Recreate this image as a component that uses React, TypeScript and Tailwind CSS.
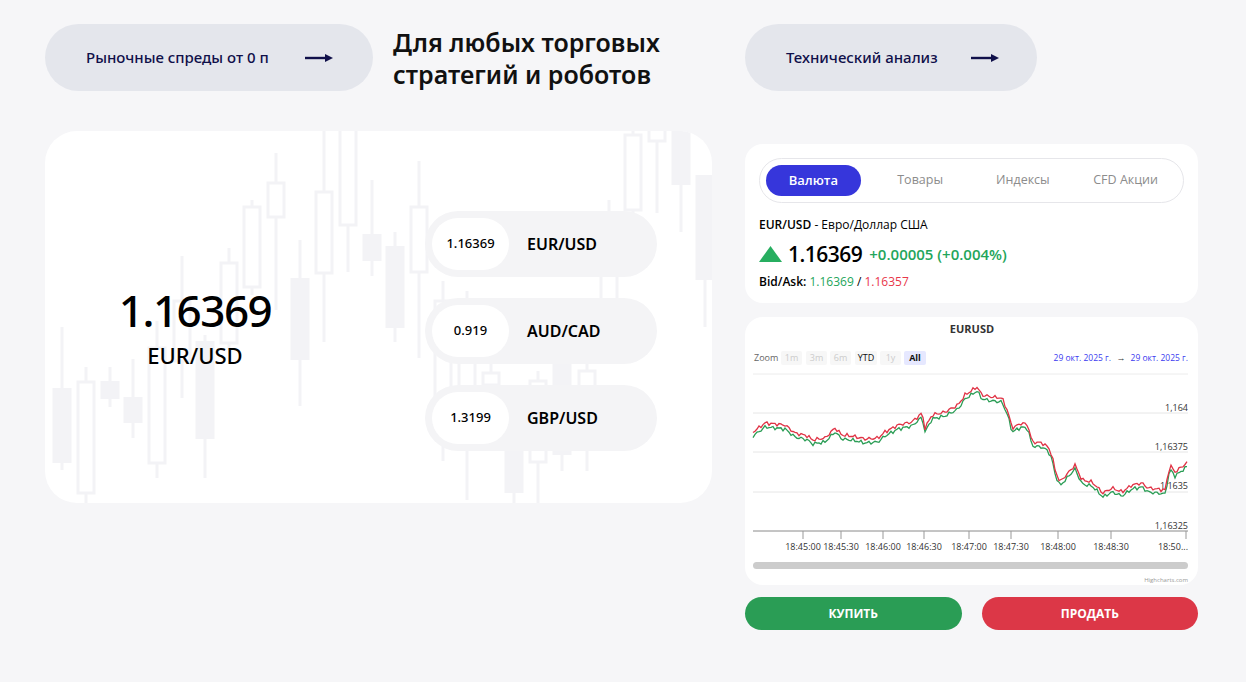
import React from "react";

type Candle = { c: number; bt: number; bb: number; wt: number; wb: number; filled: boolean };

// background candles, card-relative coordinates
const candles: Candle[] = [
  { c: 17, bt: 257, bb: 332, wt: 196, wb: 339, filled: true },
  { c: 41, bt: 251, bb: 362, wt: 236, wb: 372, filled: false },
  { c: 65, bt: 250, bb: 268, wt: 236, wb: 276, filled: true },
  { c: 88, bt: 266, bb: 292, wt: 228, wb: 307, filled: true },
  { c: 112, bt: 217, bb: 332, wt: 190, wb: 347, filled: false },
  { c: 137, bt: 170, bb: 230, wt: 125, wb: 267, filled: false },
  { c: 160, bt: 210, bb: 308, wt: 204, wb: 347, filled: true },
  { c: 184, bt: 132, bb: 212, wt: 117, wb: 219, filled: false },
  { c: 207, bt: 76, bb: 156, wt: 69, wb: 164, filled: false },
  { c: 231, bt: 52, bb: 86, wt: 22, wb: 179, filled: false },
  { c: 255, bt: 147, bb: 229, wt: 109, wb: 275, filled: true },
  { c: 279, bt: 61, bb: 142, wt: -5, wb: 211, filled: false },
  { c: 303, bt: -5, bb: 94, wt: -5, wb: 141, filled: false },
  { c: 327, bt: 103, bb: 130, wt: 49, wb: 145, filled: true },
  { c: 350, bt: 115, bb: 197, wt: 101, wb: 211, filled: true },
  { c: 374, bt: 76, bb: 141, wt: 30, wb: 227, filled: false },
  { c: 398, bt: 170, bb: 270, wt: 150, wb: 330, filled: false },
  { c: 422, bt: 170, bb: 310, wt: 160, wb: 369, filled: false },
  { c: 446, bt: 242, bb: 254, wt: 229, wb: 290, filled: false },
  { c: 469, bt: 289, bb: 362, wt: 269, wb: 372, filled: true },
  { c: 493, bt: 250, bb: 331, wt: 240, wb: 372, filled: false },
  { c: 517, bt: 229, bb: 324, wt: 220, wb: 340, filled: true },
  { c: 542, bt: 240, bb: 300, wt: 230, wb: 340, filled: false },
  { c: 564, bt: 109, bb: 169, wt: 69, wb: 189, filled: false },
  { c: 588, bt: 4, bb: 79, wt: -1, wb: 86, filled: false },
  { c: 612, bt: -30, bb: 10, wt: -30, wb: 82, filled: false },
  { c: 636, bt: -5, bb: 54, wt: -5, wb: 101, filled: true },
  { c: 660, bt: 44, bb: 149, wt: 44, wb: 196, filled: true },
];

const CandleBackground = () => (
  <svg className="absolute inset-0" width="667" height="372" viewBox="0 0 667 372">
    {candles.map((k, i) => (
      <g key={i}>
        <line x1={k.c} x2={k.c} y1={k.wt} y2={k.wb} stroke="#f3f3f6" strokeWidth="3" />
        {k.filled ? (
          <rect x={k.c - 9.5} y={k.bt} width="19" height={k.bb - k.bt} fill="#f3f3f6" />
        ) : (
          <rect x={k.c - 8} y={k.bt} width="16" height={k.bb - k.bt} fill="#ffffff" stroke="#f3f3f6" strokeWidth="3" />
        )}
      </g>
    ))}
  </svg>
);

const Arrow = () => (
  <svg width="28" height="10" viewBox="0 0 28 10">
    <line x1="0" y1="5" x2="22" y2="5" stroke="#10104a" strokeWidth="2.4" />
    <path d="M20 1 L28 5 L20 9 Z" fill="#10104a" />
  </svg>
);

const TopPill = ({ label, width, gap }: { label: string; width: string; gap: string }) => (
  <div className={`flex h-[67px] ${width} shrink-0 items-center rounded-full bg-[#e4e6ec] pl-[41px]`}>
    <span className="text-[15px] font-medium text-[#10104a]">{label}</span>
    <span className={gap}>
      <Arrow />
    </span>
  </div>
);

const PairPill = ({ price, pair }: { price: string; pair: string }) => (
  <div className="flex h-[66px] w-[232px] items-center rounded-full bg-[#f4f4f6] p-[7px]">
    <div className="flex h-[52px] w-[77px] items-center justify-center rounded-full bg-white text-[13px] font-medium text-black">
      {price}
    </div>
    <span className="ml-[18px] text-[16px] font-semibold text-black">{pair}</span>
  </div>
);

// price series, absolute page coordinates turned into chart-relative
const keys: [number, number][] = [
  [753, 432], [765, 423], [785, 425], [795, 433], [808, 436], [812, 440], [825, 438], [835, 428],
  [842, 435], [852, 436], [865, 439], [878, 438], [885, 432], [898, 425], [912, 422], [922, 413],
  [925, 428], [932, 415], [945, 412], [958, 405], [965, 395], [977, 387], [982, 395], [992, 397],
  [1002, 398], [1008, 412], [1012, 428], [1022, 423], [1028, 425], [1032, 442], [1042, 443],
  [1048, 447], [1052, 455], [1055, 470], [1060, 482], [1075, 465], [1082, 480], [1092, 482],
  [1103, 493], [1112, 488], [1122, 492], [1132, 485], [1142, 483], [1148, 488], [1165, 490],
  [1170, 465], [1175, 472], [1188, 462],
];

function series(offset: number, seed: number) {
  const pts: string[] = [];
  let i = 0;
  for (let x = 753; x <= 1188; x += 2) {
    let j = 0;
    while (j < keys.length - 2 && keys[j + 1][0] < x) j++;
    const [x0, y0] = keys[j];
    const [x1, y1] = keys[j + 1];
    const t = x1 === x0 ? 0 : Math.min(1, Math.max(0, (x - x0) / (x1 - x0)));
    const y = y0 + (y1 - y0) * t;
    const n = 1.2 * Math.sin(i * 1.7 + seed) + 0.8 * Math.sin(i * 3.3 + seed * 2);
    pts.push(`${(x - 745).toFixed(1)},${(y - 317 + offset + n).toFixed(1)}`);
    i++;
  }
  return pts.join(" ");
}

const ticks = [
  { x: 58, l: "18:45:00" },
  { x: 96, l: "18:45:30" },
  { x: 138, l: "18:46:00" },
  { x: 179, l: "18:46:30" },
  { x: 224, l: "18:47:00" },
  { x: 266, l: "18:47:30" },
  { x: 313, l: "18:48:00" },
  { x: 366, l: "18:48:30" },
];

const zoomBtns = [
  { x: 36, w: 21, l: "1m", on: false },
  { x: 61, w: 21, l: "3m", on: false },
  { x: 85, w: 21, l: "6m", on: false },
  { x: 110, w: 22, l: "YTD", on: true },
  { x: 135, w: 21, l: "1y", on: false },
  { x: 159, w: 22, l: "All", on: true },
];

const Chart = () => (
  <svg width="453" height="268" viewBox="0 0 453 268" style={{ fontFamily: "'Open Sans', sans-serif" }}>
    <text x="227" y="16" textAnchor="middle" fontSize="11" fontWeight="700" fill="#333">EURUSD</text>
    <text x="9" y="44" fontSize="9" fill="#666">Zoom</text>
    {zoomBtns.map((b) => (
      <g key={b.l}>
        <rect x={b.x} y="34" width={b.w} height="14" rx="2" fill={b.l === "All" ? "#e6e8ff" : "#f7f7f7"} />
        <text
          x={b.x + b.w / 2}
          y="44"
          textAnchor="middle"
          fontSize="9"
          fontWeight={b.l === "All" ? 700 : 400}
          fill={b.on ? "#111" : "#cccccc"}
        >
          {b.l}
        </text>
      </g>
    ))}
    <text x="366" y="44" textAnchor="end" fontSize="8.5" fill="#3c3cf0">29 окт. 2025 г.</text>
    <text x="376" y="44" textAnchor="middle" fontSize="9" fill="#333">→</text>
    <text x="443" y="44" textAnchor="end" fontSize="8.5" fill="#3c3cf0">29 окт. 2025 г.</text>

    <line x1="8" x2="443" y1="57" y2="57" stroke="#ececec" />
    <line x1="8" x2="443" y1="96" y2="96" stroke="#e6e6e6" />
    <line x1="8" x2="443" y1="135" y2="135" stroke="#e6e6e6" />
    <line x1="8" x2="443" y1="175" y2="175" stroke="#e6e6e6" />
    <text x="443" y="94" textAnchor="end" fontSize="9" fill="#333">1,164</text>
    <text x="443" y="133" textAnchor="end" fontSize="9" fill="#333">1,16375</text>
    <text x="443" y="172" textAnchor="end" fontSize="9" fill="#333">1,1635</text>
    <text x="443" y="212" textAnchor="end" fontSize="9" fill="#333">1,16325</text>

    <polyline points={series(4, 1.3)} fill="none" stroke="#2a9d55" strokeWidth="1.3" />
    <polyline points={series(0, 0.2)} fill="none" stroke="#e03345" strokeWidth="1.3" />

    <line x1="8" x2="443" y1="214" y2="214" stroke="#8a8a8a" />
    {ticks.map((t) => (
      <g key={t.l}>
        <line x1={t.x} x2={t.x} y1="214" y2="222" stroke="#999" />
        <text x={t.x} y="233" textAnchor="middle" fontSize="9" fill="#333">{t.l}</text>
      </g>
    ))}
    <line x1="441" x2="441" y1="214" y2="222" stroke="#999" />
    <text x="443" y="233" textAnchor="end" fontSize="9" fill="#333">18:50...</text>

    <rect x="8" y="245" width="435" height="7" rx="3.5" fill="#cccccc" />
    <text x="443" y="265" textAnchor="end" fontSize="6" fill="#999">Highcharts.com</text>
  </svg>
);

const tabs = ["Валюта", "Товары", "Индексы", "CFD Акции"];

export default function App() {
  return (
    <div className="min-h-[682px] w-full bg-[#f6f6f8] px-[45px] pt-[24px] font-['Noto_Sans',sans-serif]">
      <div className="flex gap-[33px]">
        {/* left column */}
        <div className="flex w-[667px] flex-col">
          <div className="flex items-center">
            <TopPill label="Рыночные спреды от 0 п" width="w-[328px]" gap="ml-[36px]" />
            <h2 className="ml-[20px] text-[25px] font-semibold leading-[32px] text-[#111]">
              Для любых торговых
              <br />
              стратегий и роботов
            </h2>
          </div>

          <div className="relative mt-[40px] h-[372px] overflow-hidden rounded-[32px] bg-white">
            <CandleBackground />
            <div className="relative flex h-full items-center pt-[28px]">
              <div className="mb-[6px] flex w-[300px] flex-col items-center">
                <span className="text-[44px] font-medium leading-[44px] tracking-[-1.5px] text-black">1.16369</span>
                <span className="mt-[10px] text-[22px] font-medium leading-[26px] text-black">EUR/USD</span>
              </div>
              <div className="ml-[80px] flex flex-col gap-[21px]">
                <PairPill price="1.16369" pair="EUR/USD" />
                <PairPill price="0.919" pair="AUD/CAD" />
                <PairPill price="1.3199" pair="GBP/USD" />
              </div>
            </div>
          </div>
        </div>

        {/* right column */}
        <div className="flex w-[453px] flex-col font-['Open_Sans',sans-serif]">
          <div className="font-['Noto_Sans',sans-serif]">
            <TopPill label="Технический анализ" width="w-[292px]" gap="ml-[33px]" />
          </div>

          <div className="mt-[53px] rounded-[18px] bg-white px-[14px] pb-[12px] pt-[14px]">
            <div className="grid h-[45px] grid-cols-4 items-center rounded-full border border-[#e6e6ea] px-[6px]">
              {tabs.map((t, i) => (
                <div
                  key={t}
                  className={
                    i === 0
                      ? "mr-[8px] flex h-[31px] items-center justify-center rounded-full bg-[#3636db] text-[13px] font-semibold text-white"
                      : "flex h-[31px] items-center justify-center text-[12.5px] font-medium text-[#8c8c8c]"
                  }
                >
                  {t}
                </div>
              ))}
            </div>
            <div className="mt-[13px] text-[12px] text-black">
              <span className="font-semibold">EUR/USD</span> - Евро/Доллар США
            </div>
            <div className="mt-[6px] flex items-center">
              <svg width="23" height="16" viewBox="0 0 23 16">
                <path d="M11.5 0 L23 16 L0 16 Z" fill="#27ae60" />
              </svg>
              <span className="ml-[6px] text-[21px] font-semibold leading-[28px] tracking-[-0.5px] text-black">1.16369</span>
              <span className="ml-[7px] text-[15px] font-semibold text-[#23a55a]">+0.00005 (+0.004%)</span>
            </div>
            <div className="mt-[5px] text-[12px] text-black">
              <span className="font-semibold">Bid/Ask:</span> <span className="text-[#23a55a]">1.16369</span> /{" "}
              <span className="text-[#e8374a]">1.16357</span>
            </div>
          </div>

          <div className="mt-[14px] h-[268px] overflow-hidden rounded-[18px] bg-white">
            <Chart />
          </div>

          <div className="mt-[12px] flex gap-[20px]">
            <button className="h-[33px] flex-1 rounded-full bg-[#2a9d55] text-[12px] font-bold text-white">
              КУПИТЬ
            </button>
            <button className="h-[33px] flex-1 rounded-full bg-[#dc3747] text-[12px] font-bold text-white">
              ПРОДАТЬ
            </button>
          </div>
        </div>
      </div>
    </div>
  );
}
